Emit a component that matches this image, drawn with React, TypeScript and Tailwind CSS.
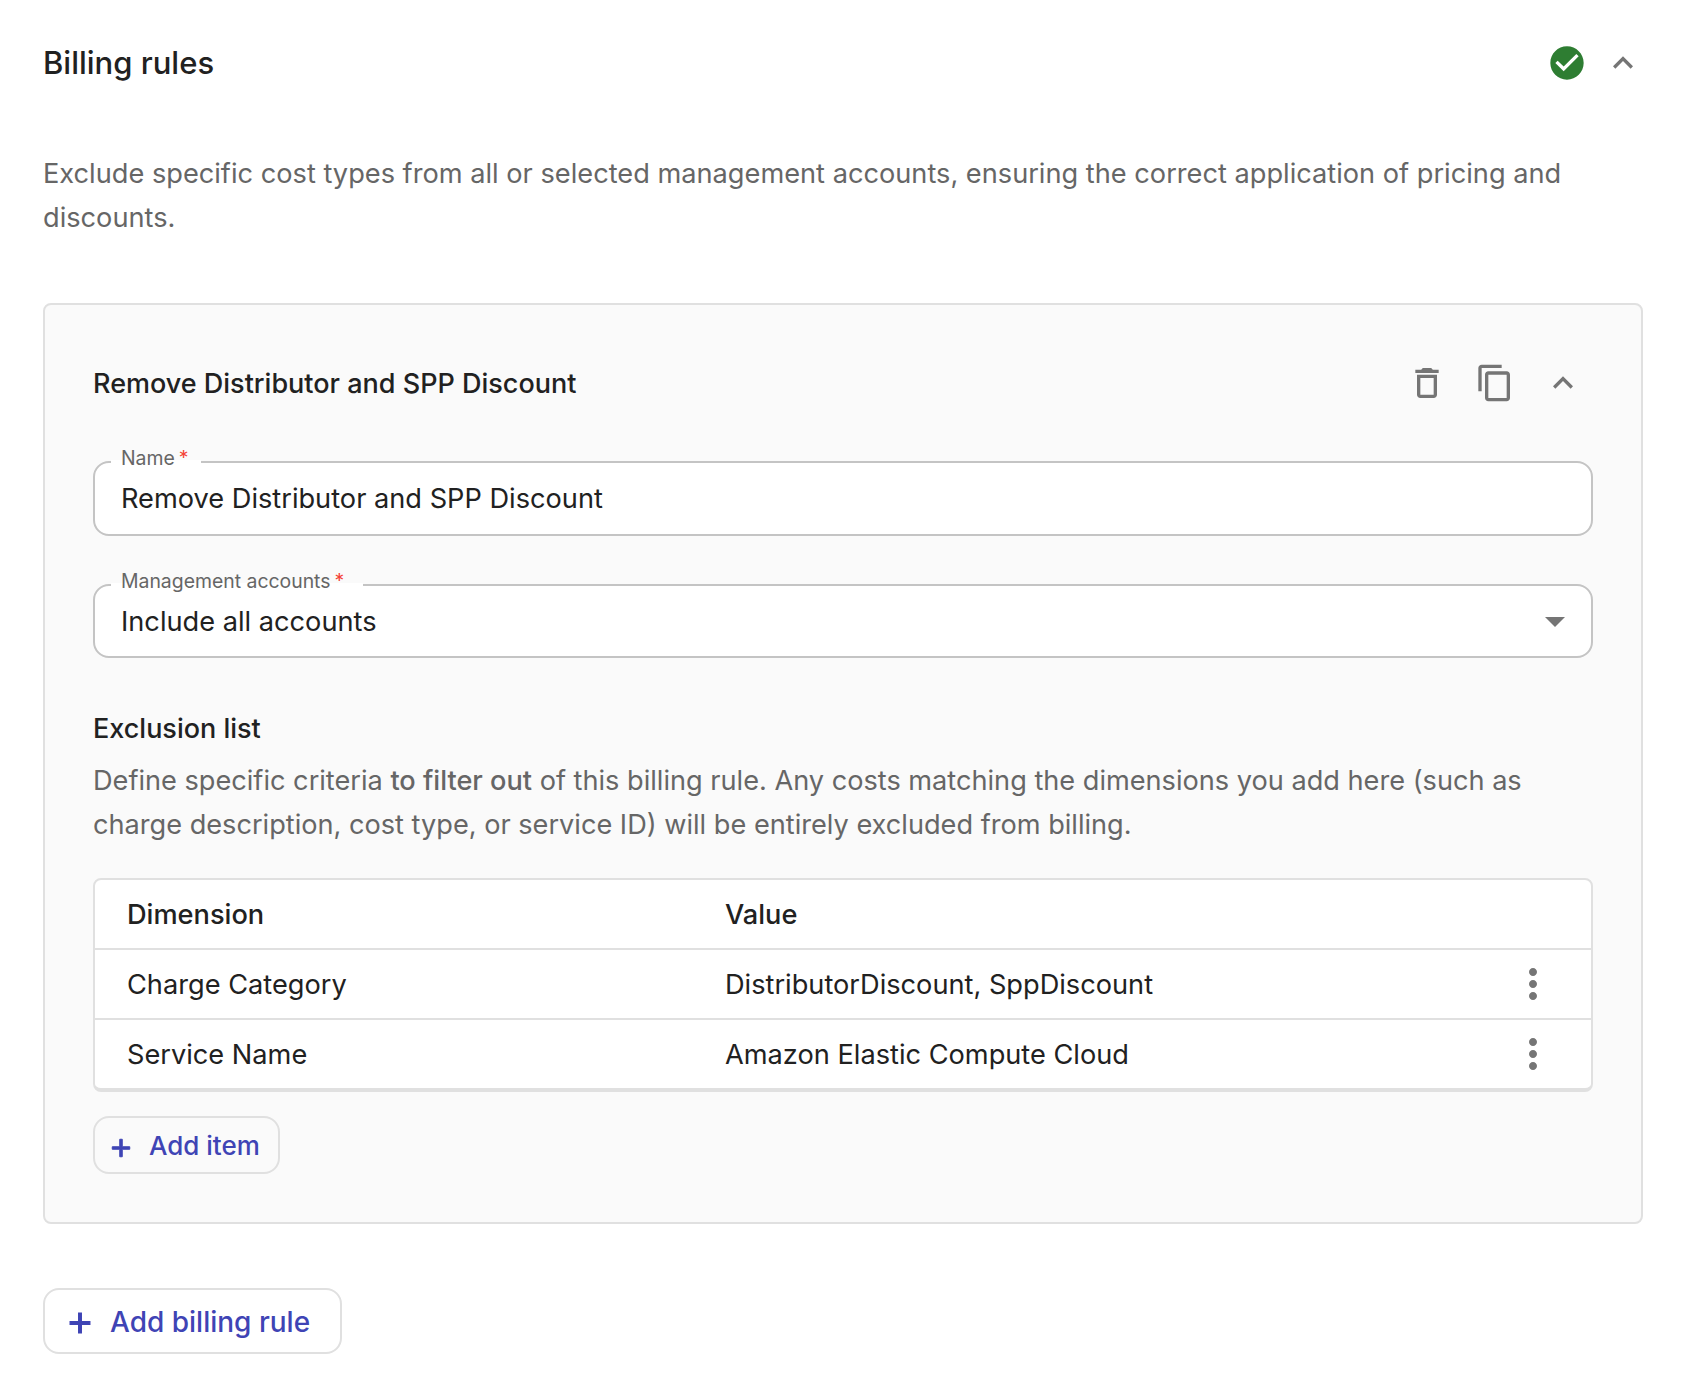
import type { ReactNode } from "react";

const PATHS = {
  check: "M12 2C6.48 2 2 6.48 2 12s4.48 10 10 10 10-4.48 10-10S17.52 2 12 2zm-2 15l-5-5 1.41-1.41L10 14.17l7.59-7.59L19 8l-9 9z",
  less: "M12 8l-6 6 1.41 1.41L12 10.83l4.59 4.58L18 14z",
  trash: "M16 9v10H8V9h8m-1.5-6h-5l-1 1H5v2h14V4h-3.5l-1-1zM18 7H6v12c0 1.1.9 2 2 2h8c1.1 0 2-.9 2-2V7z",
  copy: "M16 1H4c-1.1 0-2 .9-2 2v14h2V3h12V1zm3 4H8c-1.1 0-2 .9-2 2v14c0 1.1.9 2 2 2h11c1.1 0 2-.9 2-2V7c0-1.1-.9-2-2-2zm0 16H8V7h11v14z",
  drop: "M7 10l5 5 5-5z",
  more: "M12 8c1.1 0 2-.9 2-2s-.9-2-2-2-2 .9-2 2 .9 2 2 2zm0 2c-1.1 0-2 .9-2 2s.9 2 2 2 2-.9 2-2-.9-2-2-2zm0 6c-1.1 0-2 .9-2 2s.9 2 2 2 2-.9 2-2-.9-2-2-2z",
  add: "M19 13h-6v6h-2v-6H5v-2h6V5h2v6h6v2z",
};

function Icon({ d, className }: { d: string; className: string }) {
  return (
    <svg viewBox="0 0 24 24" fill="currentColor" className={`shrink-0 ${className}`}>
      <path d={d} />
    </svg>
  );
}

function Plus({ className }: { className: string }) {
  return (
    <svg viewBox="0 0 24 24" fill="currentColor" stroke="currentColor" strokeWidth={0.8} className={`shrink-0 ${className}`}>
      <path d={PATHS.add} />
    </svg>
  );
}

function Field({
  label,
  notch,
  children,
  className,
}: {
  label: string;
  notch: string;
  children: ReactNode;
  className: string;
}) {
  return (
    <div className={`relative flex items-center rounded-[16px] border-2 border-[#c4c4c4] bg-white pl-[26px] text-[27.2px] text-[#212121] ${className}`}>
      <span className={`absolute -top-[3px] left-[16px] h-[5px] bg-white ${notch}`} />
      <span className="absolute -top-[20px] left-[26px] flex text-[19.4px] leading-[30px] text-[#666666]">
        {label}
        <span className="ml-[4px] text-[#f44336]">*</span>
      </span>
      {children}
    </div>
  );
}

function Row({ dimension, value }: { dimension: string; value: string }) {
  return (
    <div className="flex h-[70px] items-center border-t-2 border-[#e0e0e0] pl-[32px] pr-[34px] text-[27.2px] text-[#212121]">
      <span className="mt-[2px] w-[598px]">{dimension}</span>
      <span className="mt-[2px] flex-1">{value}</span>
      <Icon d={PATHS.more} className="h-[48px] w-[48px] text-[#757575]" />
    </div>
  );
}

export default function App() {
  return (
    <div className="min-h-[1384px] bg-white pl-[43px] pr-[55px] pt-[41px] font-['Inter',sans-serif]">
      <div className="flex h-[44px] items-center justify-between">
        <h2 className="text-[31px] font-medium text-[#212121]">Billing rules</h2>
        <div className="flex items-center gap-[16px]">
          <Icon d={PATHS.check} className="h-[40px] w-[40px] text-[#2e7d32]" />
          <Icon d={PATHS.less} className="h-[40px] w-[40px] text-[#757575]" />
        </div>
      </div>

      <p className="mt-[67px] text-[27.2px] leading-[44px] text-[#666666]">
        Exclude specific cost types from all or selected management accounts, ensuring the correct application of pricing and discounts.
      </p>

      <section className="mt-[63px] h-[921px] rounded-[8px] border-2 border-[#e0e0e0] bg-[#fafafa] pl-[48px] pr-[48px] pt-[50px]">
        <div className="flex h-[56px] items-center justify-between">
          <h3 className="mt-[2px] text-[27px] font-medium text-[#212121]">Remove Distributor and SPP Discount</h3>
          <div className="mr-[10px] flex items-center gap-[28px] text-[#757575]">
            <Icon d={PATHS.trash} className="h-[40px] w-[40px]" />
            <Icon d={PATHS.copy} className="h-[40px] w-[40px]" />
            <Icon d={PATHS.less} className="h-[40px] w-[40px]" />
          </div>
        </div>

        <Field label="Name" notch="w-[90px]" className="mt-[50px] h-[75px]">
          <span className="mt-[2px]">Remove Distributor and SPP Discount</span>
        </Field>

        <Field label="Management accounts" notch="w-[252px]" className="mt-[48px] h-[74px] justify-between pr-[12px]">
          <span className="mt-[2px]">Include all accounts</span>
          <Icon d={PATHS.drop} className="h-[48px] w-[48px] text-[#757575]" />
        </Field>

        <h4 className="mt-[50px] text-[27px] font-medium leading-[42px] text-[#212121]">Exclusion list</h4>
        <p className="mt-[9px] text-[27.15px] leading-[44px] text-[#666666]">
          Define specific criteria <strong className="font-medium">to filter out</strong> of this billing rule. Any costs matching the dimensions you add here (such as charge description, cost type, or service ID) will be entirely excluded from billing.
        </p>

        <div className="mt-[31px] overflow-hidden rounded-[8px] border-2 border-b-4 border-[#e0e0e0] bg-white">
          <div className="flex h-[68px] items-center pl-[32px] text-[27.2px] font-medium text-[#212121]">
            <span className="mt-[2px] w-[598px]">Dimension</span>
            <span className="mt-[2px]">Value</span>
          </div>
          <Row dimension="Charge Category" value="DistributorDiscount, SppDiscount" />
          <Row dimension="Service Name" value="Amazon Elastic Compute Cloud" />
        </div>

        <button type="button" className="mt-[24px] flex h-[58px] w-[187px] items-center rounded-[16px] border-2 border-[#e0e0e0] pl-[11px] text-[26px] font-medium text-[#3f44b5]">
          <Plus className="mt-[5px] h-[30px] w-[30px]" />
          <span className="ml-[13px]">Add item</span>
        </button>
      </section>

      <button type="button" className="mt-[64px] flex h-[66px] w-[299px] items-center rounded-[16px] border-2 border-[#e0e0e0] pl-[18px] text-[28px] font-medium text-[#3f44b5]">
        <Plus className="mt-[3px] h-[34px] w-[34px]" />
        <span className="ml-[13px] mt-[2px]">Add billing rule</span>
      </button>
    </div>
  );
}
